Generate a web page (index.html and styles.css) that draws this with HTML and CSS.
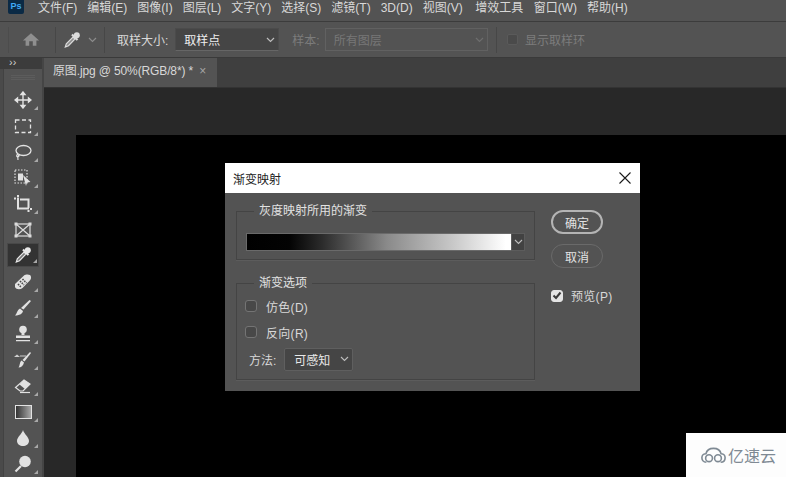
FILE: index.html
```html
<!DOCTYPE html>
<html lang="zh-CN">

<head>
    <meta charset="UTF-8">
    <meta name="viewport" content="width=device-width, initial-scale=1.0">
    <title>渐变映射</title>
    <link rel="stylesheet" href="styles.css">
</head>

<body>
    <div class="menubar">
        <div class="ps-logo">Ps</div>
        <span>文件(F)</span>
        <span>编辑(E)</span>
        <span>图像(I)</span>
        <span>图层(L)</span>
        <span>文字(Y)</span>
        <span>选择(S)</span>
        <span>滤镜(T)</span>
        <span>3D(D)</span>
        <span>视图(V)</span>
        <span class="menu-wide">增效工具</span>
        <span>窗口(W)</span>
        <span>帮助(H)</span>
    </div>

    <div class="options">
        <div class="opt-cell home-cell">
            <svg width="18" height="15" viewBox="0 0 20 16"><path d="M10 1 L19 9 H16 V15 H12 V10 H8 V15 H4 V9 H1 Z" fill="#8f8f8f"/></svg>
        </div>
        <div class="opt-cell dropper-cell">
            <svg width="18" height="18" viewBox="0 0 18 18"><circle cx="13.800" cy="4.200" r="3" fill="#dcdcdc"/><path d="M9 3.500 L14.500 9" stroke="#dcdcdc" stroke-width="2.200"/><path d="M10 6 L12 8 L5.500 14.700 L2.300 16 L3.300 12.800 Z" fill="#8a8a8a" stroke="#dcdcdc" stroke-width="1.200"/></svg>
            <svg class="chev" width="9" height="6" viewBox="0 0 9 6"><path d="M1 1 L4.500 4.500 L8 1" fill="none" stroke="#8c8c8c" stroke-width="1.200"/></svg>
        </div>
        <div class="opt-group">
            <label>取样大小:</label>
            <div class="select select-active">取样点
                <svg class="chev" width="9" height="6" viewBox="0 0 9 6"><path d="M1 1 L4.500 4.500 L8 1" fill="none" stroke="#bdbdbd" stroke-width="1.200"/></svg>
            </div>
            <label class="muted">样本:</label>
            <div class="select select-off">所有图层
                <svg class="chev" width="9" height="6" viewBox="0 0 9 6"><path d="M1 1 L4.500 4.500 L8 1" fill="none" stroke="#6e6e6e" stroke-width="1.200"/></svg>
            </div>
        </div>
        <div class="opt-ring">
            <i class="ring-box"></i>
            <span class="muted">显示取样环</span>
        </div>
    </div>

    <div class="main">
        <div class="side-edge"></div>
        <div class="toolbar">
            <div class="collapse">››</div>
            <div class="grip"></div>
            <div class="tool corner">
                <svg width="18" height="18" viewBox="0 0 18 18"><path d="M9 1 V17 M1 9 H17 M9 1 L7 3.500 H11 Z M9 17 L7 14.500 H11 Z M1 9 L3.500 7 V11 Z M17 9 L14.500 7 V11 Z" fill="#e2e2e2" stroke="#e2e2e2" stroke-width="1.400"/></svg>
            </div>
            <div class="tool corner">
                <svg width="18" height="15" viewBox="0 0 18 15"><rect x="1.500" y="1" width="15" height="12.500" fill="none" stroke="#e2e2e2" stroke-width="1.300" stroke-dasharray="4 2.500"/></svg>
            </div>
            <div class="tool corner">
                <svg width="18" height="17" viewBox="0 0 18 17"><ellipse cx="9.500" cy="6.500" rx="7.500" ry="5" fill="none" stroke="#e2e2e2" stroke-width="1.300"/><path d="M4 10 C1 12 4 14 5 12 C6 10 3 11 4 16" fill="none" stroke="#e2e2e2" stroke-width="1.200"/></svg>
            </div>
            <div class="tool corner">
                <svg width="18" height="18" viewBox="0 0 18 18"><rect x="1" y="1" width="12" height="13" fill="none" stroke="#e2e2e2" stroke-width="1.200" stroke-dasharray="1.500 1.500"/><rect x="4" y="4.500" width="5" height="7" fill="#e2e2e2"/><path d="M9 6 L16.500 13 L13 13.500 L12 17 Z" fill="#e2e2e2"/></svg>
            </div>
            <div class="tool corner">
                <svg width="20" height="20" viewBox="0 0 20 20"><path d="M1 4.500 H3 M5 1 V3 M5 3.500 V14.500 H16 M7 5.500 H15.500 V14 M15.500 16 V18 M17 15 H19" fill="none" stroke="#e2e2e2" stroke-width="2"/></svg>
            </div>
            <div class="tool">
                <svg width="18" height="16" viewBox="0 0 18 16"><rect x="2" y="2" width="14" height="12" fill="none" stroke="#dcdcdc" stroke-width="1.200"/><path d="M2 2 L16 14 M16 2 L2 14" stroke="#dcdcdc" stroke-width="1.200"/><path d="M0.500 0.500 H3.500 V3.500 H0.500 Z M14.500 0.500 H17.500 V3.500 H14.500 Z M0.500 12.500 H3.500 V15.500 H0.500 Z M14.500 12.500 H17.500 V15.500 H14.500 Z" fill="#dcdcdc"/></svg>
            </div>
            <div class="tool corner tool-on">
                <svg width="18" height="18" viewBox="0 0 18 18"><circle cx="13.800" cy="4.200" r="3" fill="#e8e8e8"/><path d="M9 3.500 L14.500 9" stroke="#e8e8e8" stroke-width="2.200"/><path d="M10 6 L12 8 L5.500 14.700 L2.300 16 L3.300 12.800 Z" fill="#777777" stroke="#e8e8e8" stroke-width="1.200"/></svg>
            </div>
            <div class="tool corner">
                <svg width="20" height="18" viewBox="0 0 20 18"><path d="M2 11 L11 2.500 C13 1 18 1 18 4 C18.500 7 16 8 9.500 15 C7 17 3 16.500 2 14 Z" fill="#e2e2e2"/><path d="M7 8 L11 12 M9.500 6 L13.500 10 M5 11 L8 14" stroke="#4a4a4a" stroke-width="1.600" stroke-dasharray="1.500 1"/></svg>
            </div>
            <div class="tool corner">
                <svg width="18" height="18" viewBox="0 0 18 18"><path d="M15.500 1 L17 2 L9.500 10.500 L7 9 Z" fill="#e2e2e2"/><path d="M6 9.500 L9 12 C8.500 15 5 16.500 1 16.500 C3 15 3 11 6 9.500 Z" fill="#e2e2e2"/></svg>
            </div>
            <div class="tool corner">
                <svg width="18" height="18" viewBox="0 0 18 18"><circle cx="9" cy="4.500" r="3.800" fill="#e2e2e2"/><path d="M7.500 7 H10.500 V10 H7.500 Z M2 10.500 H16 V13 H2 Z M2 15 H16 V16.300 H2 Z" fill="#e2e2e2"/></svg>
            </div>
            <div class="tool corner">
                <svg width="20" height="18" viewBox="0 0 20 18"><path d="M17 1 L18 2 L11.500 10.500 L9.500 9 Z" fill="#e2e2e2"/><path d="M8.500 9.500 L11 11.500 C10.500 14.500 8 16.500 5.500 16.500 C7 15 6.500 11 8.500 9.500 Z" fill="#e2e2e2"/><path d="M1 6 L4 3.500 L7 6 H3 Z" fill="#cfcfcf"/><path d="M7 5 H13" stroke="#cfcfcf"/></svg>
            </div>
            <div class="tool corner">
                <svg width="18" height="15" viewBox="0 0 18 15"><path d="M10 1 L16 5 L9 12 H6 L1.500 8.500 Z" fill="none" stroke="#e2e2e2" stroke-width="1.200"/><path d="M10 1 L16 5 L11 10 L5.500 5.500 Z" fill="#e2e2e2"/><path d="M6 13.500 H16" stroke="#e2e2e2" stroke-width="1.200"/></svg>
            </div>
            <div class="tool corner">
                <div class="grad-icon"></div>
            </div>
            <div class="tool corner">
                <svg width="14" height="18" viewBox="0 0 14 18"><path d="M7 1 C8 5 13 8 13 12 C13 15 10 17 7 17 C4 17 1 15 1 12 C1 8 6 5 7 1 Z" fill="#e2e2e2"/></svg>
            </div>
            <div class="tool corner">
                <svg width="18" height="18" viewBox="0 0 18 18"><circle cx="11" cy="6.500" r="5.800" fill="#e2e2e2"/><path d="M7 11 L1.500 16.500" stroke="#e2e2e2" stroke-width="2.200"/></svg>
            </div>
        </div>

        <div class="docs">
            <div class="tabs">
                <div class="tab">原图.jpg @ 50%(RGB/8*) * <span class="tab-x">×</span></div>
            </div>
            <div class="workspace">
                <div class="canvas"></div>
            </div>
        </div>
    </div>

    <div class="dialog">
        <div class="dialog-title">
            <span>渐变映射</span>
            <svg width="12" height="12" viewBox="0 0 12 12"><path d="M0.500 0.500 L11.500 11.500 M11.500 0.500 L0.500 11.500" stroke="#1a1a1a" stroke-width="1.100"/></svg>
        </div>
        <div class="dialog-body">
            <div class="dialog-left">
                <fieldset class="group group-map">
                    <legend>灰度映射所用的渐变</legend>
                    <div class="gradient-row">
                        <div class="gradient"></div>
                        <div class="gradient-arrow">
                            <svg width="9" height="6" viewBox="0 0 9 6"><path d="M1 1 L4.500 4.500 L8 1" fill="none" stroke="#bdbdbd" stroke-width="1.100"/></svg>
                        </div>
                    </div>
                </fieldset>
                <fieldset class="group group-opts">
                    <legend>渐变选项</legend>
                    <div class="check-row"><i class="check"></i>仿色(D)</div>
                    <div class="check-row"><i class="check"></i>反向(R)</div>
                    <div class="method-row">
                        <span>方法:</span>
                        <div class="method-select">可感知
                            <svg width="9" height="6" viewBox="0 0 9 6"><path d="M1 1 L4.500 4.500 L8 1" fill="none" stroke="#bdbdbd" stroke-width="1.100"/></svg>
                        </div>
                    </div>
                </fieldset>
            </div>
            <div class="dialog-right">
                <button class="btn btn-main">确定</button>
                <button class="btn">取消</button>
                <div class="preview">
                    <i class="check check-on">
                        <svg width="10" height="9" viewBox="0 0 10 9"><path d="M1.500 4.500 L4 7 L8.500 1.500" fill="none" stroke="#3a3a3a" stroke-width="2"/></svg>
                    </i>
                    预览(P)
                </div>
            </div>
        </div>
    </div>

    <div class="watermark">
        <svg width="25" height="17" viewBox="0 0 28 18"><path d="M6 16.500 C2.500 16.500 1 14 1 11.500 C1 9 3 7 5.500 7 C6.500 3 10 1 14 1 C18 1 21.500 3 22.500 7 C25 7 27 9 27 11.500 C27 14 25.500 16.500 22 16.500" fill="none" stroke="#7f8a94" stroke-width="1.800"/><circle cx="9" cy="12" r="3.800" fill="none" stroke="#7f8a94" stroke-width="1.800"/><circle cx="19" cy="12" r="3.800" fill="none" stroke="#7f8a94" stroke-width="1.800"/></svg>
        <span>亿速云</span>
    </div>
</body>

</html>
```

FILE: styles.css
```css
* {
    box-sizing: border-box;
}

body {
    margin: 0;
    width: 786px;
    height: 477px;
    overflow: hidden;
    position: relative;
    display: flex;
    flex-direction: column;
    background: #535353;
    color: #d8d8d8;
    font-family: "Liberation Sans", "Noto Sans CJK SC", sans-serif;
    font-size: 12px;
}

.menubar {
    height: 21px;
    display: flex;
    align-items: flex-start;
    gap: 10px;
    padding-left: 8px;
    line-height: 16px;
    background: #535353;
    white-space: nowrap;
}

.menu-wide {
    margin: 0 0.5px 0 2.5px;
}

.ps-logo {
    width: 16px;
    height: 14px;
    margin-right: 4px;
    background: #0b2a45;
    color: #3fa9f5;
    font-size: 9px;
    font-weight: bold;
    line-height: 13px;
    text-align: center;
    border-radius: 0 0 2px 2px;
}

.options {
    height: 37px;
    display: flex;
    align-items: center;
    padding-left: 8px;
    border-top: 1px solid #3c3c3c;
    border-bottom: 1px solid #3a3a3a;
}

.opt-cell {
    height: 26px;
    display: flex;
    align-items: center;
    border-right: 1px solid #474747;
}

.home-cell {
    width: 48px;
    padding-left: 13px;
    border-left: 1px solid #4c4c4c;
}

.dropper-cell {
    width: 49px;
    padding-left: 7px;
    gap: 7px;
}

.opt-group {
    display: flex;
    align-items: center;
    width: 392px;
    height: 26px;
    padding-left: 12px;
    border-right: 1px solid #474747;
}

.opt-group label {
    margin-right: 5px;
}

.opt-group label:first-child {
    margin-right: 7px;
}

.muted {
    color: #7c7c7c;
}

.select {
    height: 23px;
    display: flex;
    align-items: center;
    justify-content: space-between;
    padding: 0 3px 0 8px;
}

.select-active {
    width: 104px;
    margin-right: 13px;
    background: #454545;
    border: 1px solid #4b4b4b;
    border-bottom-color: #666666;
    color: #eeeeee;
}

.select-off {
    width: 163px;
    border: 1px solid #616161;
    color: #777777;
}

.opt-ring {
    display: flex;
    align-items: center;
    gap: 7px;
    padding-left: 10px;
}

.ring-box {
    width: 11px;
    height: 11px;
    background: #4a4a4a;
    border: 1px solid #5a5a5a;
    border-radius: 2px;
}

.main {
    flex: 1;
    display: flex;
    min-height: 0;
}

.side-edge {
    width: 4px;
    background: #4a4a4a;
    border-right: 1px solid #424242;
}

.toolbar {
    width: 40px;
    background: #535353;
    border-right: 2px solid #454545;
}

.collapse {
    height: 11px;
    margin-left: -4px;
    padding-left: 9px;
    background: #3c3c3c;
    color: #cfcfcf;
    font-size: 11px;
    line-height: 9px;
}

.grip {
    height: 18px;
    margin: 0 4px;
    background: repeating-linear-gradient(#5c5c5c 0 1px, transparent 1px 2px) center / 24px 6px no-repeat;
}

.tool {
    height: 26px;
    width: 32px;
    margin-left: 3px;
    display: flex;
    align-items: center;
    justify-content: center;
    position: relative;
}

.corner::after {
    content: "";
    position: absolute;
    right: 1px;
    bottom: 3px;
    border-style: solid;
    border-width: 0 0 4px 4px;
    border-color: transparent transparent #a8a8a8 transparent;
}

.tool-on {
    height: 24px;
    margin-bottom: 2px;
    background: #333333;
    border: 1px solid #484848;
}

.grad-icon {
    width: 17px;
    height: 14px;
    background: linear-gradient(to right, #333333, #a8a8a8);
    border: 1px solid #e2e2e2;
}

.docs {
    flex: 1;
    display: flex;
    flex-direction: column;
}

.tabs {
    height: 30px;
    background: #3f3f3f;
    border-bottom: 1px solid #333333;
}

.tab {
    width: 173px;
    height: 29px;
    padding-left: 9px;
    background: #535353;
    line-height: 27px;
    white-space: nowrap;
    font-size: 12px;
    letter-spacing: -0.130px;
}

.tab-x {
    margin-left: 3px;
    color: #a5a5a5;
}

.workspace {
    flex: 1;
    padding: 47px 0 0 32px;
    background: #282828;
}

.canvas {
    height: 100%;
    background: #000000;
}

.dialog {
    position: absolute;
    left: 225px;
    top: 163px;
    width: 415px;
    height: 228px;
    background: #535353;
}

.dialog-title {
    height: 30px;
    display: flex;
    align-items: center;
    justify-content: space-between;
    padding: 0 9px 0 8px;
    background: #ffffff;
    color: #222222;
}

.dialog-body {
    display: flex;
    padding: 10px 0 0 11px;
}

.dialog-left {
    width: 299px;
}

.group {
    margin: 0;
    padding: 0;
    min-width: 0;
    border: 1px solid #444444;
    box-shadow: 0 1px 0 #5c5c5c;
}

.group legend {
    margin-left: 17px;
    padding: 0 5px;
    line-height: 16px;
    color: #e2e2e2;
}

.group-map {
    height: 57px;
    margin-bottom: 15px;
}

.gradient-row {
    display: flex;
    height: 18px;
    margin: 14px 0 0 9px;
}

.gradient {
    width: 265px;
    background: linear-gradient(to right, #000000 0%, #030303 16%, #2a2a2a 28%, #8a8a8a 53%, #c8c8c8 78%, #ffffff 98%);
    border: 1px solid #6a6a6a;
    border-right: 0;
}

.gradient-arrow {
    width: 14px;
    display: flex;
    align-items: center;
    justify-content: center;
    background: #424242;
    border: 1px solid #5c5c5c;
}

.group-opts {
    height: 105px;
    padding-top: 2px;
}

.check-row {
    display: flex;
    align-items: center;
    gap: 9px;
    height: 26px;
    padding-left: 8px;
    letter-spacing: 0.3px;
}

.check {
    width: 12px;
    height: 12px;
    display: inline-flex;
    align-items: center;
    justify-content: center;
    background: #484848;
    border: 1px solid #747474;
    border-radius: 3px;
}

.check-on {
    background: #e4e4e4;
    border-color: #e4e4e4;
}

.method-row {
    display: flex;
    align-items: center;
    gap: 8px;
    height: 24px;
    margin-top: 2px;
    padding-left: 12px;
}

.method-select {
    width: 69px;
    height: 23px;
    display: flex;
    align-items: center;
    justify-content: space-between;
    padding: 0 3px 0 9px;
    background: #454545;
    border: 1px solid #5f5f5f;
    border-radius: 2px;
    color: #e8e8e8;
}

.dialog-right {
    display: flex;
    flex-direction: column;
    align-items: flex-start;
    gap: 10px;
    padding: 7px 0 0 16px;
}

.btn {
    width: 52px;
    height: 24px;
    padding: 0;
    background: transparent;
    border: 1px solid #6a6a6a;
    border-radius: 12px;
    color: #e2e2e2;
    font: inherit;
}

.btn-main {
    border: 2px solid #b4b4b4;
}

.preview {
    display: flex;
    align-items: center;
    gap: 8px;
    margin-top: 9px;
    letter-spacing: 0.3px;
}

.watermark {
    position: absolute;
    right: 0;
    bottom: 0;
    width: 100px;
    height: 44px;
    display: flex;
    align-items: center;
    gap: 2px;
    padding-left: 15px;
    background: #fdfdfd;
    color: #7f8a94;
    font-size: 16px;
}
```
